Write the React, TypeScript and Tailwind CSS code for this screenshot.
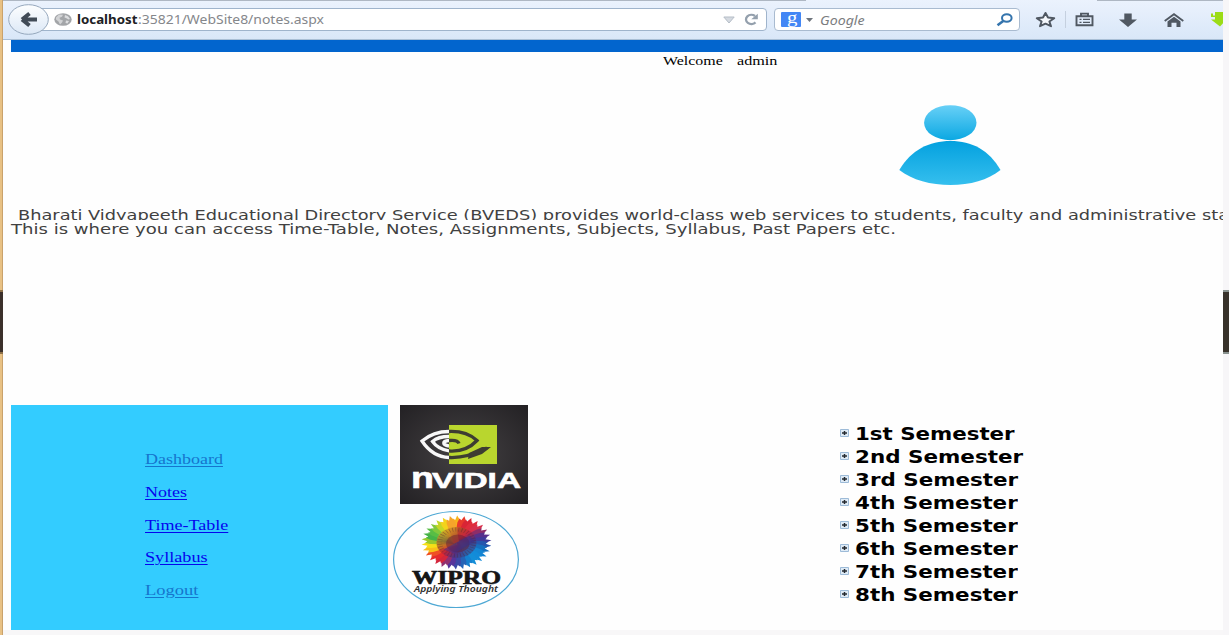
import { useLayoutEffect, useRef, useState } from "react";

type FitProps = { text: string; width: number; className?: string };

// Stretches a single line of text horizontally to a set width.
function Fit({ text, width, className = "" }: FitProps) {
  const ref = useRef<HTMLSpanElement>(null);
  const [scale, setScale] = useState(1);
  useLayoutEffect(() => {
    if (ref.current) setScale(width / ref.current.offsetWidth);
  }, [width, text]);
  return (
    <span
      ref={ref}
      className={`inline-block shrink-0 origin-left whitespace-pre ${className}`}
      style={{ transform: `scaleX(${scale})` }}
    >
      {text}
    </span>
  );
}

function BackButton() {
  return (
    <svg className="absolute left-[5px] top-[4px] h-[31px] w-[41px]" viewBox="0 0 41 31">
      <defs>
        <linearGradient id="back" x1="0" y1="0" x2="0" y2="1">
          <stop offset="0" stopColor="#fdfeff" />
          <stop offset="1" stopColor="#dce8f6" />
        </linearGradient>
      </defs>
      <ellipse cx="20.5" cy="15.5" rx="19.8" ry="14.8" fill="url(#back)" stroke="#96a8bd" />
      <path d="M14 15.500 21.500 9.500M14 15.500 21.500 21.500M14 15.500H29" fill="none" stroke="#414b57" strokeWidth="4" />
    </svg>
  );
}

function Globe() {
  return (
    <svg className="h-[13px] w-[18px]" viewBox="0 0 18 13">
      <ellipse cx="9" cy="6.5" rx="8.7" ry="6.3" fill="#a3a5a8" />
      <path d="M2 4.5 5 1.5l4 .2-1 2-2.5 1L6 6.5l3 1-1 2-2 2-1.5-3L2 6.5z" fill="#d2d3d5" />
      <path d="m11 2 3 1.2L16 6l-1.5.5L12 5l-1.5-.5zM12 7.5l3 .5-1.5 2.5-2-.5z" fill="#dcdddf" />
    </svg>
  );
}

function Toolbar() {
  return (
    <header className="relative flex h-10 shrink-0 items-start border-b border-[#a9bfd6] bg-linear-to-b from-[#ebf2fd] to-[#d9e7f8] pt-2">
      <div className="absolute left-0 top-0 h-px w-[803px] bg-[#aeb7c3]" />
      <div className="absolute right-0 top-0 h-px w-[126px] bg-[#aeb7c3]" />
      <div className="ml-[25px] flex h-[23px] w-[739px] items-center rounded-r-sm border border-[#9fb4cc] bg-white pl-[25px] pr-[7px]">
        <Globe />
        <div className="ml-[5px] flex w-[260px] items-center pt-px font-['Noto_Sans'] text-[12px] leading-5">
          <div className="w-[61px]"><Fit text="localhost" width={61} className="font-bold text-[#202124]" /></div>
          <Fit text=":35821/WebSite8/notes.aspx" width={186} className="text-[#85878b]" />
        </div>
        <svg className="ml-auto h-[8px] w-[12px]" viewBox="0 0 12 8">
          <path d="M.8 1h10.4L6 7z" fill="#d5dae1" stroke="#b5bdc7" />
        </svg>
        <svg className="ml-[8px] h-[13px] w-[16px]" viewBox="0 0 16 13">
          <path d="M12.5 9.4A5.4 4.6 0 1 1 12 3" fill="none" stroke="#94a0ad" strokeWidth="2.3" />
          <path d="M14.8.7v5.6H8.3z" fill="#94a0ad" />
        </svg>
      </div>
      <div className="ml-[7px] flex h-[23px] w-[246px] items-center rounded-sm border border-[#a9bbd0] bg-white pl-[6px] pr-[6px]">
        <div className="flex h-[15px] w-[20px] items-center justify-center rounded-[1px] bg-[#4387f5] pb-[5px] font-['Liberation_Serif'] text-[17px] leading-none text-white">
          <Fit text="g" width={11} />
        </div>
        <svg className="ml-[5px] h-[4px] w-[7px]" viewBox="0 0 7 4"><path d="M0 0h7L3.5 4z" fill="#6f757d" /></svg>
        <div className="ml-[7px] mt-[2px] font-['Noto_Sans'] text-[12px] italic leading-5 text-[#7b7d80]"><Fit text="Google" width={45} /></div>
        <svg className="ml-auto h-[14px] w-[17px]" viewBox="0 0 17 14">
          <ellipse cx="10.8" cy="5" rx="4.8" ry="3.8" fill="none" stroke="#3474ad" strokeWidth="2" />
          <path d="M7.3 8 1.5 12.3" stroke="#3474ad" strokeWidth="2.6" />
        </svg>
      </div>
      <div className="flex h-[23px] flex-1 items-center overflow-hidden">
        <svg className="ml-[15px] h-[17px] w-[21px] shrink-0" viewBox="0 0 21 17">
          <path d="m10.5 2 2.5 4.6 6.2.6-4.8 3.3 1.6 4.7-5.5-2.5L5 15.2l1.6-4.7-4.8-3.3L8 6.600z" fill="#f5f8fc" stroke="#505862" strokeWidth="2" strokeLinejoin="round" />
        </svg>
        <div className="ml-[9px] h-[17px] w-px shrink-0 bg-[#c5d0df]" />
        <svg className="ml-[9px] h-[15px] w-[19px] shrink-0" viewBox="0 0 19 15">
          <path d="M1.500 4.200h16v9h-16zM6 4V1.600h7V4" fill="none" stroke="#505862" strokeWidth="1.900" />
          <path d="M4.500 7.300h2M8 7.300h7M4.500 10.300h2M8 10.300h7" stroke="#505862" strokeWidth="1.300" />
        </svg>
        <svg className="ml-[25px] h-[14px] w-[18px] shrink-0" viewBox="0 0 18 14"><path d="M5.300.5h7.400v6H18L9 14 0 6.500h5.300z" fill="#505862" /></svg>
        <svg className="ml-[27px] h-[14px] w-[20px] shrink-0" viewBox="0 0 20 14">
          <path d="M.7 8 10 1.200 19.300 8" fill="none" stroke="#505862" strokeWidth="1.800" />
          <path d="m3.500 8.500 6.500-4.700 6.500 4.700V14h-4v-4.200h-5V14h-4z" fill="#505862" />
        </svg>
        <svg className="ml-[26px] h-[15px] w-[18px] shrink-0" viewBox="0 0 18 15"><path d="M5 0h9v6h4l-8 8.500L1 7.500h4V5H1V1.500h2v2h2z" fill="#9bdc16" /></svg>
      </div>
      <BackButton />
    </header>
  );
}

function Person() {
  return (
    <svg className="ml-[896px] h-[81px] w-[102px] shrink-0" viewBox="0 0 102 81">
      <defs>
        <linearGradient id="head" x1="0" y1="0" x2="0" y2="1">
          <stop offset="0" stopColor="#68d0f7" />
          <stop offset="1" stopColor="#0ba8e2" />
        </linearGradient>
        <linearGradient id="body" x1="0" y1="0" x2="0" y2="1">
          <stop offset="0" stopColor="#04a1df" />
          <stop offset="1" stopColor="#35bfee" />
        </linearGradient>
      </defs>
      <ellipse cx="51.300" cy="17.700" rx="26.200" ry="17.500" fill="url(#head)" />
      <path d="M.3 65C12 45 30 36 51.500 36S90 45 101.500 65C89 75 71 80 51.500 80S13 75 .300 65z" fill="url(#body)" />
    </svg>
  );
}

function Nvidia() {
  return (
    <svg className="ml-[7px] h-[99px] w-[128px]" viewBox="0 0 128 99">
      <defs>
        <radialGradient id="slate" r=".7"><stop offset="0" stopColor="#444143" /><stop offset="1" stopColor="#232124" /></radialGradient>
        <clipPath id="leftHalf"><path d="M0 0h49v99H0z" /></clipPath>
        <clipPath id="rightHalf"><path d="M49 0h79v99H49z" /></clipPath>
        <g id="eye" fill="none" strokeWidth="3.300">
          <path d="M49 26.500C36 26.500 28 31 22 36 28 45 37 52.500 50 52.500 64 53 75 49 87 43" />
          <path d="M49 26.500C62 26 71 30 77 35.500 70 43 61 46.500 50 46 39 44.500 35 40 32.500 36.500 37 32.500 42 31.500 49 31.500" />
          <path d="M49 41C42 40 42 36 49 35.500c5-.500 9 0 10 3" />
        </g>
      </defs>
      <path d="M0 0h128v99H0z" fill="url(#slate)" />
      <path d="M49 20h48v39H49z" fill="#b9d62e" />
      <g clipPath="url(#leftHalf)"><use href="#eye" stroke="#f8f8f8" /></g>
      <g clipPath="url(#rightHalf)"><use href="#eye" stroke="#3d3d32" /><path d="M69 48 82 42h9l-9 7-14 5z" fill="#3d3d32" /></g>
      <text x="11" y="82.500" textLength="23" lengthAdjust="spacingAndGlyphs" fill="white" stroke="white" strokeWidth=".6" className="font-['Liberation_Sans'] text-[29px] font-bold">n</text>
      <text x="32" y="82.500" textLength="89" lengthAdjust="spacingAndGlyphs" fill="white" stroke="white" strokeWidth=".6" className="font-['Liberation_Sans'] text-[22.500px] font-bold">VIDIA</text>
    </svg>
  );
}

const petals = [
  "#f8b31c", "#e83a2b", "#d82535", "#df2c3c", "#d7304c", "#8e2d68", "#57318c", "#403a99", "#2556ad", "#1570bf", "#1485d3", "#128bd9", "#138ed8",
  "#1580cf", "#2463b6", "#3c48a5", "#57349a", "#923070", "#d4263c", "#e52a2d", "#ef4f24", "#f8bf19", "#f5df17", "#98c82d", "#45b348", "#58bd45", "#83c83c", "#c5d627", "#f3d31b", "#f6a52a",
];

function Wipro() {
  return (
    <svg className="mt-[6px] h-[99px] w-[128px]" viewBox="0 0 128 99">
      <defs>
        <linearGradient id="core" x1="0" y1="0" x2="1" y2="1">
          <stop offset=".1" stopColor="#dcae24" /><stop offset=".35" stopColor="#a64d27" /><stop offset=".48" stopColor="#c22336" /><stop offset=".67" stopColor="#513078" /><stop offset="1" stopColor="#176cae" />
        </linearGradient>
      </defs>
      <ellipse cx="63" cy="49.500" rx="62.400" ry="48" fill="white" stroke="#4ea8d4" strokeWidth="1.200" />
      <g transform="translate(63.500 32.500) scale(1.3 1)">
        {petals.map((color, i) => (
          <path key={i} d="M-2 0-3.500-20-2.700-24-1-22.500 .5-27 2.200-23.500 3.500-20 2 0z" fill={color} transform={`rotate(${(i * 360) / petals.length})`} />
        ))}
        <circle r="15.500" fill="url(#core)" opacity=".7" />
        <circle r="13" fill="none" stroke="#542432" strokeWidth="4" strokeDasharray=".6 1.800" opacity=".45" />
        <circle cx="1" cy="1" r="9" fill="#641e34" opacity=".5" />
        <path d="M-10 7 10-7 14-1-2 11z" fill="#353090" opacity=".5" />
      </g>
      <text x="19" y="73.500" textLength="89" lengthAdjust="spacingAndGlyphs" fill="#151515" stroke="#151515" strokeWidth=".6" className="font-['Liberation_Serif'] text-[18px] font-bold">WIPRO</text>
      <text x="21" y="81.500" textLength="84" lengthAdjust="spacingAndGlyphs" fill="#303030" className="font-['Noto_Sans'] text-[8px] font-semibold italic">Applying Thought</text>
    </svg>
  );
}

const links = [
  { text: "Dashboard", width: 78, visited: true },
  { text: "Notes", width: 42, visited: false },
  { text: "Time-Table", width: 83, visited: false },
  { text: "Syllabus", width: 63, visited: false },
  { text: "Logout", width: 53, visited: true },
];

const semesters = [
  { text: "1st Semester", width: 160 },
  { text: "2nd Semester", width: 168 },
  { text: "3rd Semester", width: 163 },
  { text: "4th Semester", width: 163 },
  { text: "5th Semester", width: 163 },
  { text: "6th Semester", width: 163 },
  { text: "7th Semester", width: 163 },
  { text: "8th Semester", width: 163 },
];

export default function App() {
  return (
    <div className="flex h-[635px] w-[1229px] overflow-hidden bg-[#f8f7f8]">
      <div className="flex w-[3px] shrink-0 flex-col border-r border-[#caa26b] bg-[#e8c184]">
        <div className="mt-[290px] h-[64px] w-[3px] border-y-2 border-[#8e7048] bg-[#3b302b]" />
      </div>
      <main className="flex w-[1220px] shrink-0 flex-col overflow-hidden">
        <Toolbar />
        <div className="flex h-[590px] shrink-0 flex-col bg-[#fefefe]">
          <div className="ml-2 h-3 shrink-0 bg-[#0265ce]" />
          <div className="flex h-[53px] shrink-0 pl-[660px] font-['Liberation_Serif'] text-[13px] leading-[17px] text-black">
            <div className="w-[74px]"><Fit text="Welcome" width={60} /></div>
            <Fit text="admin" width={41} />
          </div>
          <Person />
          <div className="mt-5 flex h-[14px] shrink-0 items-start pl-[15px] font-['DejaVu_Sans'] text-[14px] leading-[18px] text-[#414141]">
            <Fit text="Bharati Vidyapeeth Educational Directory Service (BVEDS) provides world-class web services to students, faculty and administrative sta" width={1211} />
          </div>
          <div className="flex h-[185px] shrink-0 items-start pl-2 font-['DejaVu_Sans'] text-[14px] leading-[19px] text-[#414141]">
            <Fit text="This is where you can access Time-Table, Notes, Assignments, Subjects, Syllabus, Past Papers etc." width={885} className="bg-[#fefefe]" />
          </div>
          <div className="flex h-[225px] shrink-0">
            <nav className="ml-2 flex w-[377px] flex-col bg-[#33ccff] pl-[134px] pt-[38.400px] font-['Liberation_Serif'] text-[15px]">
              {links.map((link) => (
                <a key={link.text} href="#" className={`flex h-[32.6px] items-center ${link.visited ? "text-[#1675cd]" : "text-[#0505ed]"}`}>
                  <Fit text={link.text} width={link.width} className="underline underline-offset-2" />
                </a>
              ))}
            </nav>
            <section className="ml-[5px] w-[135px]"><Nvidia /><Wipro /></section>
            <ul className="ml-[312px] pt-[17px]">
              {semesters.map((semester) => (
                <li key={semester.text} className="flex h-[23px] items-center font-['DejaVu_Sans'] text-[18px] font-bold leading-[23px] text-black">
                  <svg className="mb-px mr-[6px] h-[8px] w-[9px] shrink-0" viewBox="0 0 9 8">
                    <path d="M.5.5h8v7h-8z" fill="#dfebf6" stroke="#9dbbd8" />
                    <path d="M2 4h5M4.500 2v4" stroke="#252a30" strokeWidth="1.500" />
                  </svg>
                  <Fit text={semester.text} width={semester.width} />
                </li>
              ))}
            </ul>
          </div>
        </div>
      </main>
      <aside className="w-[6px] shrink-0 bg-[#f7f6f8]">
        <div className="mt-[290px] h-[64px] border-y-2 border-[#89928f] bg-[#38322b]" />
      </aside>
    </div>
  );
}
